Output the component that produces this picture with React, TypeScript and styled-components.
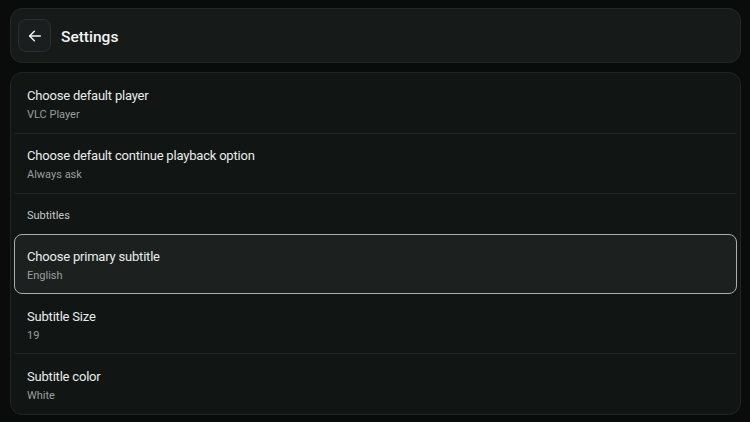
import React, { useState } from 'react';
import styled, { createGlobalStyle } from 'styled-components';

const GlobalStyle = createGlobalStyle`
  html, body {
    margin: 0;
    padding: 0;
    background: #0a0b0b;
  }
  body {
    font-family: Roboto, 'Noto Sans', sans-serif;
  }
`;

const Page = styled.div`
  width: 750px;
  height: 422px;
  box-sizing: border-box;
  padding: 8px 9px 0 10px;
  display: flex;
  flex-direction: column;
  gap: 9px;
  background: #0a0b0b;
`;

const Header = styled.div`
  box-sizing: border-box;
  display: flex;
  align-items: center;
  gap: 10px;
  height: 55px;
  padding: 0 7px;
  background: #161a19;
  border: 1px solid #232726;
  border-radius: 12px;
`;

const BackButton = styled.button`
  box-sizing: border-box;
  display: flex;
  align-items: center;
  justify-content: center;
  width: 33px;
  height: 33px;
  padding: 0;
  background: #1a1e1e;
  border: 1px solid #2a2f2e;
  border-radius: 8px;
  cursor: pointer;
`;

const Title = styled.h1`
  margin: 2px 0 0;
  font-size: 15.5px;
  font-weight: 500;
  color: #f2f4f3;
`;

const List = styled.div`
  box-sizing: border-box;
  display: flex;
  flex-direction: column;
  height: 343px;
  padding: 0 3px;
  background: #111514;
  border: 1px solid #202423;
  border-radius: 12px;
  overflow: hidden;
`;

const Row = styled.div<{ active?: boolean }>`
  box-sizing: border-box;
  display: flex;
  flex-direction: column;
  justify-content: center;
  height: 60px;
  padding: 3px 12px 0;
  border: 1px solid ${p => (p.active ? '#aab0ae' : 'transparent')};
  border-radius: 8px;
  background: ${p => (p.active ? '#1c2120' : 'transparent')};
  cursor: pointer;
`;

const RowTitle = styled.div`
  font-size: 13px;
  line-height: 20px;
  letter-spacing: -0.2px;
  color: #e9ecea;
  margin-bottom: 1px;
`;

const RowValue = styled.div`
  font-size: 11px;
  line-height: 16px;
  color: #9a9f9d;
`;

const SectionLabel = styled.div`
  box-sizing: border-box;
  height: 40px;
  display: flex;
  align-items: center;
  padding: 2px 13px 0;
  font-size: 11px;
  color: #c4c8c6;
`;

const Divider = styled.div`
  height: 1px;
  margin: 0 1px;
  background: #222625;
`;

type Item =
  | { kind: 'row'; title: string; value: string }
  | { kind: 'section'; title: string };

const items: Item[] = [
  { kind: 'row', title: 'Choose default player', value: 'VLC Player' },
  { kind: 'row', title: 'Choose default continue playback option', value: 'Always ask' },
  { kind: 'section', title: 'Subtitles' },
  { kind: 'row', title: 'Choose primary subtitle', value: 'English' },
  { kind: 'row', title: 'Subtitle Size', value: '19' },
  { kind: 'row', title: 'Subtitle color', value: 'White' },
];

function BackArrow() {
  return (
    <svg width="16" height="16" viewBox="0 0 24 24" fill="none" stroke="#f2f4f3" strokeWidth="2.2" strokeLinecap="round" strokeLinejoin="round">
      <path d="M20 12H4" />
      <path d="M11 5l-7 7 7 7" />
    </svg>
  );
}

export default function App() {
  const [active, setActive] = useState(3);

  return (
    <>
      <GlobalStyle />
      <Page>
        <Header>
          <BackButton aria-label="Back">
            <BackArrow />
          </BackButton>
          <Title>Settings</Title>
        </Header>
        <List>
          {items.map((item, i) => {
            const next = items[i + 1];
            // no divider next to the focused row or around the section label
            const showDivider =
              next &&
              item.kind === 'row' &&
              next.kind === 'row' &&
              i !== active &&
              i + 1 !== active;
            const dividerBeforeSection = next && next.kind === 'section';
            return (
              <React.Fragment key={item.title}>
                {item.kind === 'section' ? (
                  <SectionLabel>{item.title}</SectionLabel>
                ) : (
                  <Row active={i === active} onClick={() => setActive(i)}>
                    <RowTitle>{item.title}</RowTitle>
                    <RowValue>{item.value}</RowValue>
                  </Row>
                )}
                {(showDivider || dividerBeforeSection) && <Divider />}
              </React.Fragment>
            );
          })}
        </List>
      </Page>
    </>
  );
}
